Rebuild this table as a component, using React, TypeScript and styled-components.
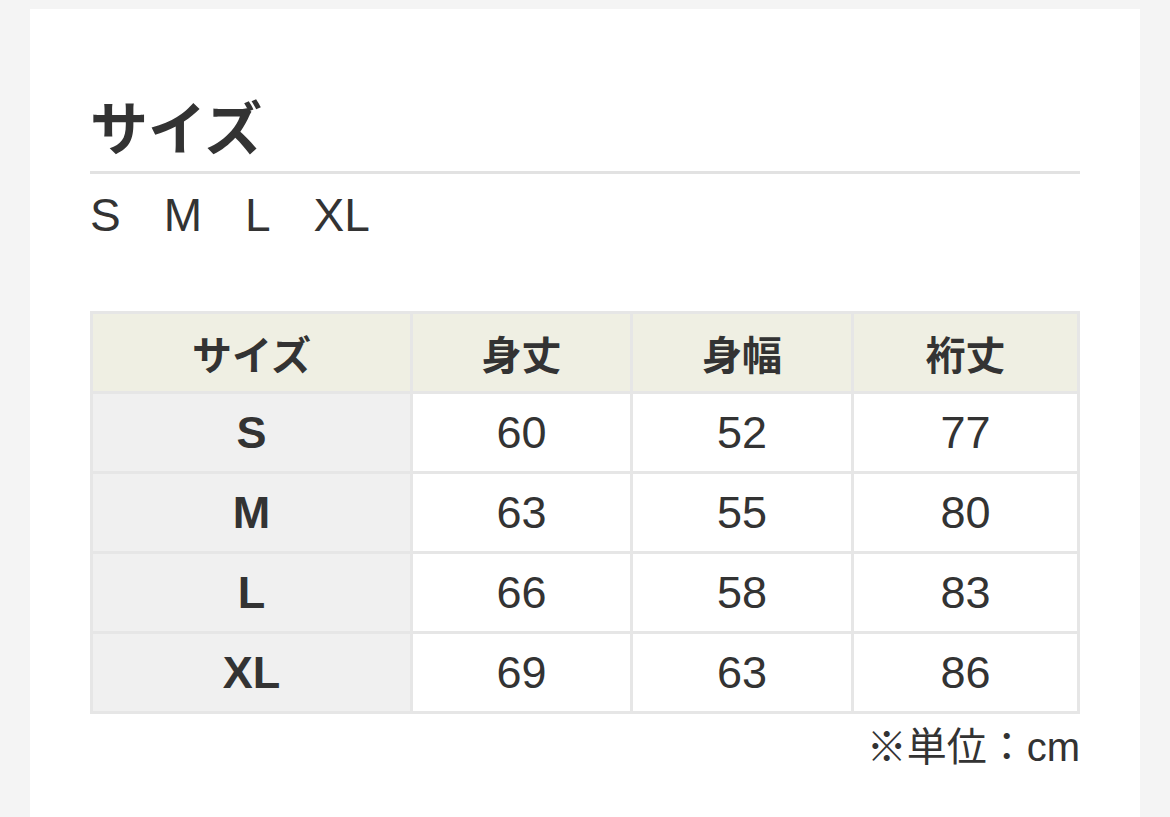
import React from "react";
import styled, { createGlobalStyle } from "styled-components";

type SizeRow = {
  size: string;
  length: number;
  width: number;
  sleeve: number;
};

const sizes = ["S", "M", "L", "XL"];

const rows: SizeRow[] = [
  { size: "S", length: 60, width: 52, sleeve: 77 },
  { size: "M", length: 63, width: 55, sleeve: 80 },
  { size: "L", length: 66, width: 58, sleeve: 83 },
  { size: "XL", length: 69, width: 63, sleeve: 86 },
];

const GlobalStyle = createGlobalStyle`
  html, body {
    margin: 0;
    padding: 0;
    background-color: #f4f4f4;
    font-family: "Liberation Sans", "Noto Sans CJK JP", sans-serif;
    color: #333333;
  }
`;

function App() {
  return (
    <>
      <GlobalStyle />
      <Page>
        <Card>
          <Heading>サイズ</Heading>
          <SizeList>
            {sizes.map((s) => (
              <SizeItem key={s}>{s}</SizeItem>
            ))}
          </SizeList>

          <Table>
            <colgroup>
              <col style={{ width: 320 }} />
              <col style={{ width: 220 }} />
              <col style={{ width: 221 }} />
              <col />
            </colgroup>
            <thead>
              <tr>
                <HeadCell>サイズ</HeadCell>
                <HeadCell>身丈</HeadCell>
                <HeadCell>身幅</HeadCell>
                <HeadCell>裄丈</HeadCell>
              </tr>
            </thead>
            <tbody>
              {rows.map((r) => (
                <tr key={r.size}>
                  <SizeCell>{r.size}</SizeCell>
                  <Cell>{r.length}</Cell>
                  <Cell>{r.width}</Cell>
                  <Cell>{r.sleeve}</Cell>
                </tr>
              ))}
            </tbody>
          </Table>
          <Note>※単位：cm</Note>
        </Card>
      </Page>
    </>
  );
}

const Page = styled.div`
  min-height: 817px;
  padding: 9px 30px 0;
  box-sizing: border-box;
`;

const Card = styled.div`
  background-color: #ffffff;
  min-height: 808px;
  padding: 78px 60px 40px;
  box-sizing: border-box;
`;

const Heading = styled.h2`
  margin: 0;
  font-family: "Noto Sans CJK JP", sans-serif;
  font-size: 58px;
  font-weight: 700;
  line-height: 76px;
  color: #333333;
  border-bottom: 3px solid #e2e2e2;
  padding-bottom: 8px;
`;

const SizeList = styled.div`
  display: flex;
  gap: 43px;
  margin-top: 13px;
  margin-bottom: 68px;
`;

const SizeItem = styled.span`
  font-size: 46px;
  line-height: 56px;
  color: #333333;
`;

const Table = styled.table`
  width: 990px;
  border-collapse: collapse;
  table-layout: fixed;
  border: 3px solid #e6e6e6;
`;

const HeadCell = styled.th`
  height: 77px;
  padding: 0;
  background-color: #efefe3;
  border: 3px solid #e6e6e6;
  font-family: "Noto Sans CJK JP", sans-serif;
  font-size: 40px;
  font-weight: 700;
  color: #333333;
  text-align: center;
  vertical-align: middle;
`;

const Cell = styled.td`
  height: 77px;
  padding: 0;
  background-color: #ffffff;
  border: 3px solid #e6e6e6;
  font-size: 45px;
  font-weight: 400;
  color: #333333;
  text-align: center;
  vertical-align: middle;
`;

const SizeCell = styled(Cell)`
  background-color: #f0f0f0;
  font-weight: 700;
`;

const Note = styled.p`
  margin: 8px 0 0;
  text-align: right;
  font-size: 40px;
  line-height: 50px;
  color: #333333;
`;

export default App;
